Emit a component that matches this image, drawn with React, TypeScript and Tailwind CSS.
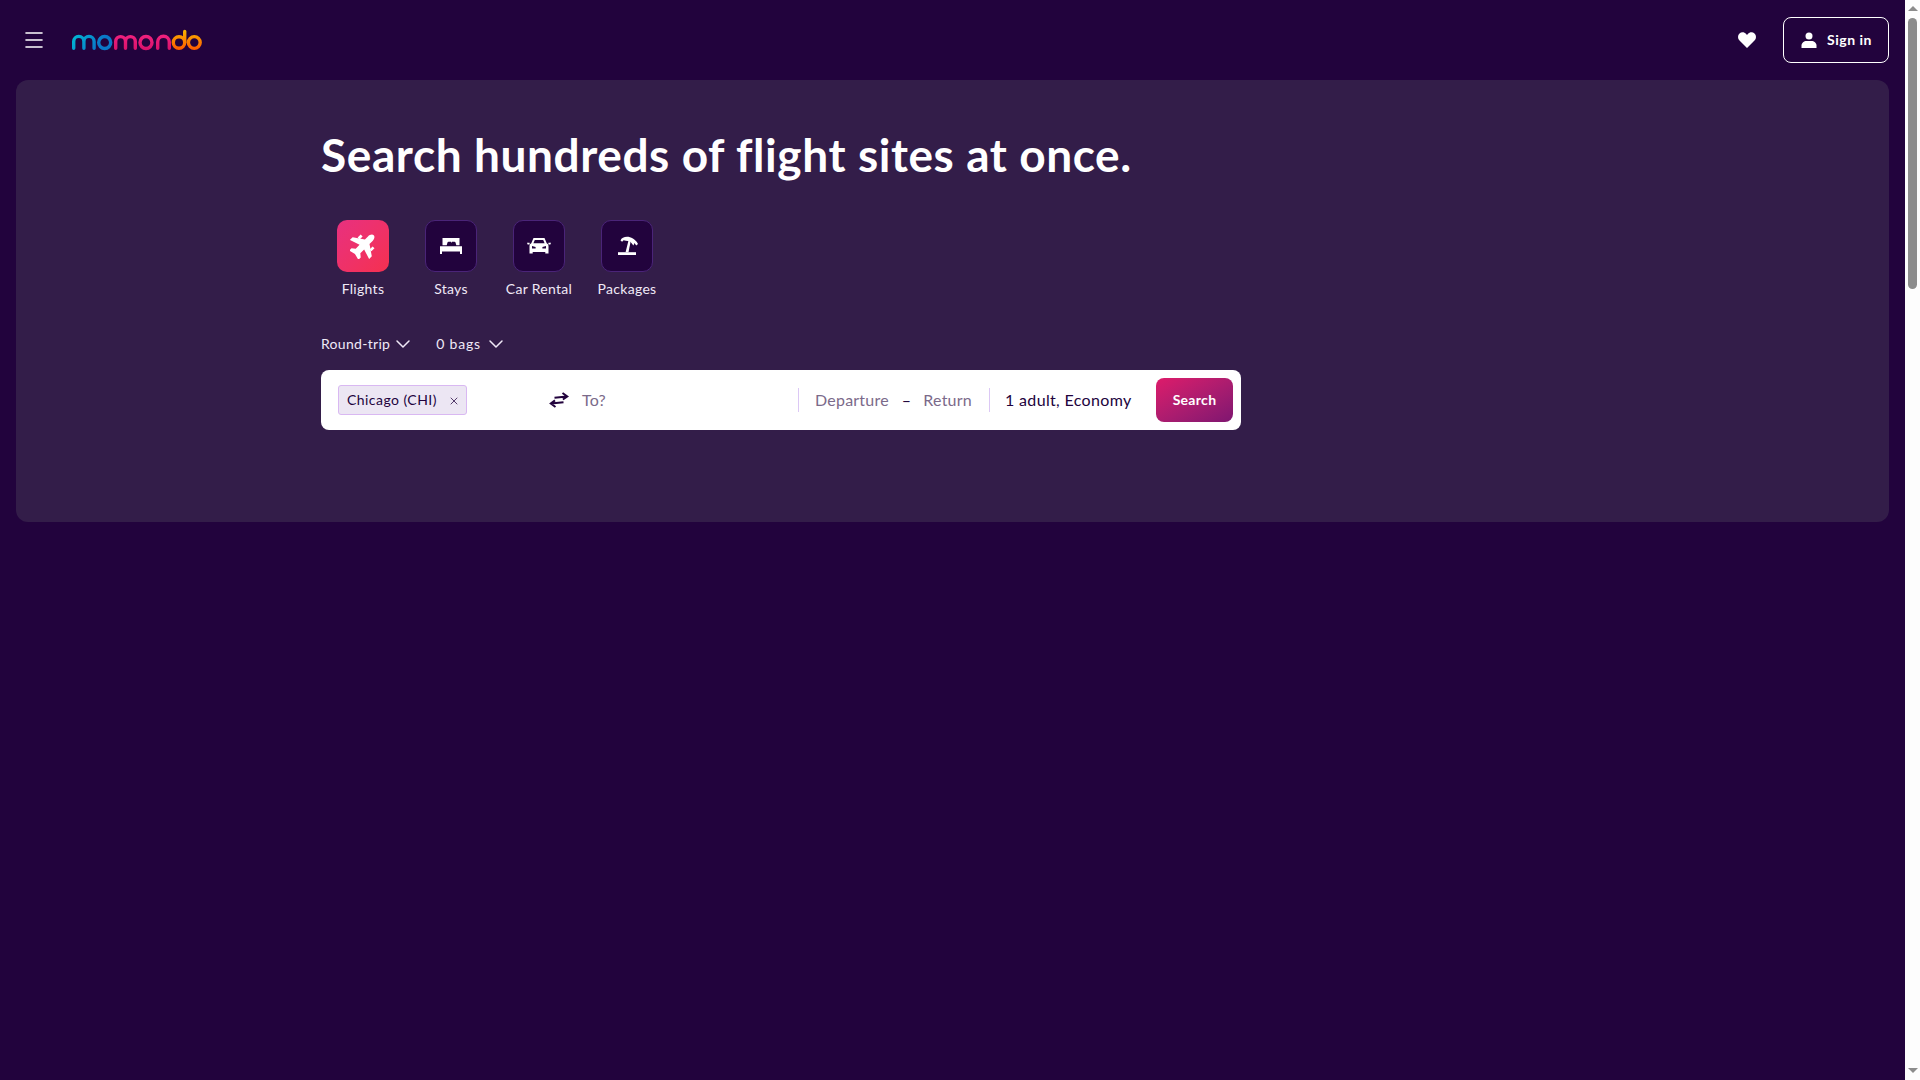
import { ChevronDown, Menu, X } from "lucide-react";
import type { ReactNode } from "react";

const font = "font-['Lato','Noto_Sans',sans-serif]";

function Logo() {
  return (
    <svg width="130" height="24" viewBox="0 0 130 24" fill="none" strokeWidth="3.4" strokeLinecap="round">
      <defs>
        <linearGradient id="mo" gradientUnits="userSpaceOnUse" x1="0" y1="7" x2="20" y2="24">
          <stop offset="0" stopColor="#00bcd4" />
          <stop offset="1" stopColor="#0a78c8" />
        </linearGradient>
        <linearGradient id="mid" gradientUnits="userSpaceOnUse" x1="0" y1="7" x2="0" y2="23">
          <stop offset="0" stopColor="#f0217e" />
          <stop offset="1" stopColor="#d8106a" />
        </linearGradient>
        <linearGradient id="end" gradientUnits="userSpaceOnUse" x1="0" y1="2" x2="0" y2="23">
          <stop offset="0" stopColor="#f7b500" />
          <stop offset="1" stopColor="#ff5400" />
        </linearGradient>
      </defs>
      <g stroke="url(#mo)">
        <path d="M1.700 20.300V13.500a5 5 0 0 1 10.200 0V20.300M11.900 13.500a5 5 0 0 1 10.200 0V20.300" />
        <circle cx="32.700" cy="14.500" r="6" />
      </g>
      <g stroke="url(#mid)">
        <path d="M43.700 20.300V13.500a4.900 4.900 0 0 1 9.800 0V20.300M53.500 13.500a4.900 4.900 0 0 1 9.800 0V20.300" />
        <circle cx="74" cy="14.500" r="6" />
        <path d="M85.700 20.300V14a5.800 5.800 0 0 1 11.600 0V20.300" />
      </g>
      <g stroke="url(#end)">
        <circle cx="107" cy="14.500" r="5.700" />
        <path d="M112.700 14.500V3.500" />
        <circle cx="122.300" cy="14.500" r="5.900" />
      </g>
    </svg>
  );
}

function PlaneIcon() {
  return (
    <svg width="26" height="26" viewBox="0 0 24 24" fill="#fff">
      <g transform="rotate(45 12 12)">
        <path d="M12 -2c1.800 0 3 2.200 3 4.500v4l9.500 6.500v3.500l-9.500-3v5l3 2.500v3l-6-1.500-6 1.500v-3l3-2.500v-5l-9.500 3V13l9.500-6.500v-4C9 .2 10.200-2 12-2z" />
        <path d="M18.500 6h2.500v4h-2.500zM3 6h2.500v4H3z" />
      </g>
    </svg>
  );
}

function BedIcon() {
  return (
    <svg width="24" height="24" viewBox="0 0 24 24" fill="#fff">
      <path d="M3.500 4h17v7.200h-3.200l-.8-2.700q-.2-.8-1-.8h-2.500l-.8 1.300-.2-1.300H9.500q-.8 0-1 .8l-.8 2.700H3.500z" />
      <path d="M1 12.300h22V20h-2v-2.500H3V20H1z" />
    </svg>
  );
}

function CarIcon() {
  return (
    <svg width="24" height="24" viewBox="0 0 24 24" fill="#fff">
      <path fillRule="evenodd" d="M6.500 4h11l2.200 5.200c1 .5 1.800 1.500 1.800 2.800v7.500h-3.200V18H5.700v1.500H2.500V12c0-1.300.8-2.300 1.800-2.800zm1.300 1.900L6.400 9.200h11.200l-1.400-3.300zM5 12v2.400h3.600V13zm14 0-3.600 1v1.400H19z" />
      <path d="M0 8.800h2.600v1.600H.6zM21.400 8.800H24l-.6 1.600h-2z" />
    </svg>
  );
}

function PalmIcon() {
  return (
    <svg width="24" height="24" viewBox="0 0 24 24" fill="#fff">
      <path d="M3 18.200h18v2.800H3z" />
      <path d="M10.600 18.200 13.400 7h2.300l-2.200 11.200z" />
      <path d="M5.500 6.500C7.500 1.500 18 .8 23 10l-1.800 1.500-1.700-2.400-1.100 2.500-3-3.800-2.500-.8-2-.2-2.300-.6-1.500 1.600z" />
    </svg>
  );
}

function Tab({ label, icon, active }: { label: string; icon: ReactNode; active?: boolean }) {
  return (
    <div className="flex w-[88px] flex-col items-center">
      <div
        className={
          active
            ? "flex h-[52px] w-[52px] items-center justify-center rounded-[10px] bg-gradient-to-br from-[#e8307f] to-[#f5304f]"
            : "flex h-[52px] w-[52px] items-center justify-center rounded-[10px] border border-[#4a2478] bg-[#22033d]"
        }
      >
        {icon}
      </div>
      <span className="mt-[8px] text-[14px] leading-[18px] tracking-[0.3px] text-[#f0e9f7]">{label}</span>
    </div>
  );
}

export default function App() {
  return (
    <div className={`flex h-[1080px] w-full overflow-hidden bg-[#22033d] ${font}`}>
      <div className="min-w-0 flex-1">
        <header className="flex h-20 items-center justify-between pl-[22px] pr-4">
          <div className="flex items-center">
            <Menu size={24} color="#fff" strokeWidth={1.6} absoluteStrokeWidth />
            <div className="ml-[26px] flex">
              <Logo />
            </div>
          </div>
          <div className="flex items-center">
            <svg width="20" height="20" viewBox="0 0 24 24" fill="#fff" className="mr-[26px]">
              <path d="M12 21.500 3 12.600C.6 10.200.6 6.300 3 4.100c2.300-2.100 5.900-1.800 8 .6l1 1.200 1-1.200c2.100-2.400 5.700-2.700 8-.6 2.400 2.200 2.400 6.100 0 8.500z" />
            </svg>
            <button className="flex h-[46px] w-[106px] items-center justify-center gap-[10px] rounded-lg border border-white pb-[2px] pl-px text-[14px] font-bold tracking-[0.5px] text-white">
              <svg width="16" height="16" viewBox="0 0 16 16" fill="#fff" className="translate-y-px">
                <circle cx="8" cy="4" r="3.500" />
                <path d="M0.500 16v-2.500C.5 10.800 3 9 5.500 9h5c2.500 0 5 1.800 5 4.500V16z" />
              </svg>
              Sign in
            </button>
          </div>
        </header>
        <section className="mx-4 h-[442px] rounded-xl bg-[#331d49] pl-[305px] pt-[43px]">
          <h1 className="text-[46px] font-bold leading-[64px] tracking-[0.58px] text-white">
            Search hundreds of flight sites at once.
          </h1>
          <div className="-ml-[2px] mt-[33px] flex">
            <Tab label="Flights" icon={<PlaneIcon />} active />
            <Tab label="Stays" icon={<BedIcon />} />
            <Tab label="Car Rental" icon={<CarIcon />} />
            <Tab label="Packages" icon={<PalmIcon />} />
          </div>
          <div className="mt-[34px] flex items-center text-[14px] leading-[18px] tracking-[0.3px] text-[#f0e9f7]">
            <span>Round-trip</span>
            <ChevronDown size={24} className="ml-px" strokeWidth={1.5} />
            <span className="ml-[21px] tracking-[0.8px]">0 bags</span>
            <ChevronDown size={24} className="ml-[3px]" strokeWidth={1.5} />
          </div>
          <div className="mt-[14px] flex h-[60px] w-[920px] items-center rounded-lg bg-white pl-[17px] pr-2 text-[16px] tracking-[0.22px] text-[#7b6a8a]">
            <div className="flex h-[30px] w-[129px] items-center justify-between rounded-[3px] border border-[#d9b8f2] bg-[#ece6f3] pb-px pl-2 pr-[6px] text-[14px] tracking-[0.45px] text-[#22033d]">
              Chicago (CHI)
              <X size={12} strokeWidth={1.5} className="translate-y-px" />
            </div>
            <svg width="20" height="16" viewBox="0 0 20 16" fill="none" stroke="#22033d" strokeWidth="2" className="ml-[82px]">
              <path d="M6.500 15 1.800 11.500 6 8.400M2 11.500l12.500-1.200M13.500 1l4.800 3.500-4.400 3M18 4.500 5.500 5.800" />
            </svg>
            <span className="ml-[13px] w-[216px] pb-px">To?</span>
            <div className="h-6 w-px bg-[#dcc8f5]" />
            <span className="ml-4 pb-px">Departure</span>
            <span className="ml-[13px] text-[#22033d]">–</span>
            <span className="ml-[12px] pb-px">Return</span>
            <div className="ml-[17px] h-6 w-px bg-[#dcc8f5]" />
            <span className="ml-[15px] pb-px tracking-[0.35px] text-[#22033d]">1 adult, Economy</span>
            <button className="ml-auto h-[44px] w-[77px] rounded-lg bg-gradient-to-br from-[#de1a6a] to-[#7f1570] pb-[2px] text-[14px] font-bold tracking-[0.3px] text-white">
              Search
            </button>
          </div>
        </section>
      </div>
      <div className="flex w-[15px] flex-col items-center justify-between bg-[#fdfdfd] pb-[7px] pt-[6px]">
        <div className="h-0 w-0 border-x-[5px] border-b-[5px] border-x-transparent border-b-[#8c8c8c]" />
        <div className="absolute right-[3px] top-[18px] h-[271px] w-[9px] rounded-[5px] bg-[#8c8c8c]" />
        <div className="h-0 w-0 border-x-[5px] border-t-[5px] border-x-transparent border-t-[#8c8c8c]" />
      </div>
    </div>
  );
}
